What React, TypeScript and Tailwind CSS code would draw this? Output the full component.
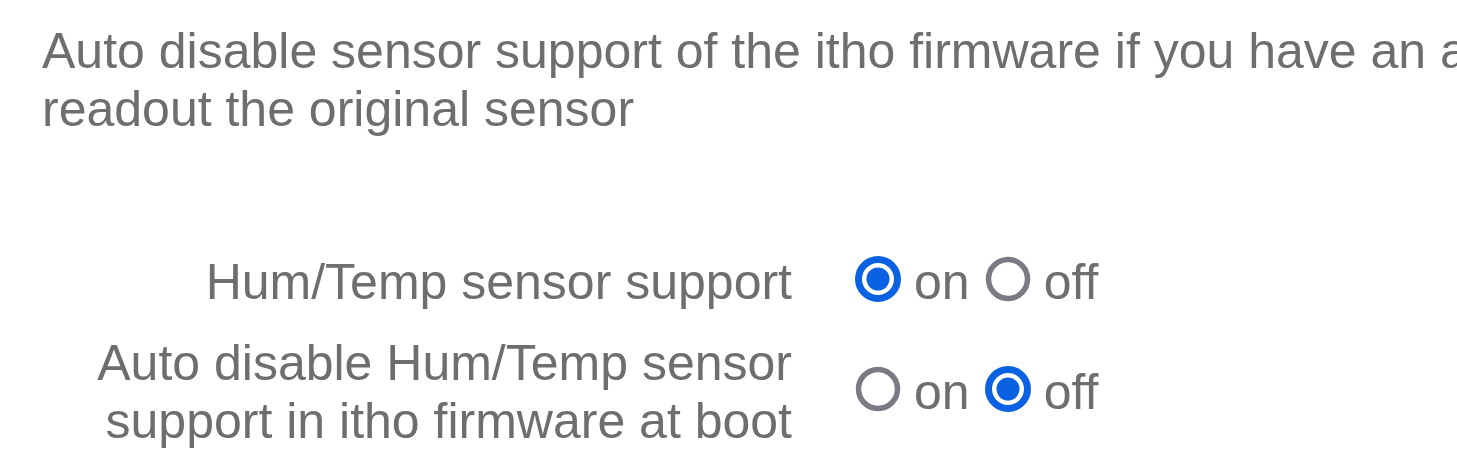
import type { ReactNode } from 'react';

function Radio({ checked }: { checked: boolean }) {
  return (
    <svg width="46" height="46" viewBox="0 0 46 46" className="mb-[6px] shrink-0">
      {checked ? (
        <>
          <circle cx="23" cy="23" r="19.5" fill="#fff" stroke="#0a62e2" strokeWidth="7" />
          <circle cx="23" cy="23" r="11.5" fill="#0a62e2" />
        </>
      ) : (
        <circle cx="23" cy="23" r="19.5" fill="#fff" stroke="#7a7a84" strokeWidth="5.5" />
      )}
    </svg>
  );
}

function OnOff({ on }: { on: boolean }) {
  return (
    <div className="flex items-center">
      <Radio checked={on} />
      <span className="ml-[13px]">on</span>
      <span className="ml-[15px] flex items-center">
        <Radio checked={!on} />
      </span>
      <span className="ml-[13px]">off</span>
    </div>
  );
}

function Row({ label, children }: { label: ReactNode; children: ReactNode }) {
  return (
    <>
      <div className="text-right">{label}</div>
      {children}
    </>
  );
}

export default function App() {
  return (
    <div className="min-h-screen w-[1457px] overflow-hidden bg-white pl-[42px] pt-[22px] font-['Liberation_Sans',Arial,sans-serif] text-[50px] leading-[58px] text-[#6e6e6e]">
      <p className="whitespace-nowrap">
        Auto disable sensor support of the itho firmware if you have an add-on that needs to
        <br />
        readout the original sensor
      </p>

      <div className="mt-[115px] grid grid-cols-[750px_auto] items-center gap-x-[63px] gap-y-[23px]">
        <Row label="Hum/Temp sensor support">
          <OnOff on={true} />
        </Row>
        <Row label="Auto disable Hum/Temp sensor support in itho firmware at boot">
          <OnOff on={false} />
        </Row>
      </div>
    </div>
  );
}
